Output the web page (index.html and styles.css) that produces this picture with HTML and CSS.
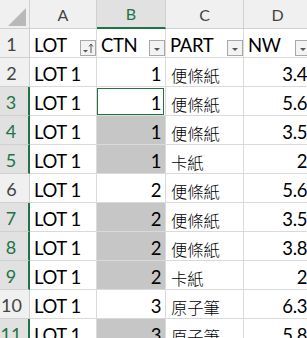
FILE: index.html
```html
<!DOCTYPE html>
<html lang="zh-Hant">
<head>
  <meta charset="UTF-8" />
  <title>Sheet</title>
  <link rel="stylesheet" href="styles.css">
</head>
<body>
  <div class="sheet">
    <div class="head corner">
      <svg width="29" height="28" viewBox="0 0 29 28"><polygon points="8,26 26,26 26,8" fill="#b9b9b9"/></svg>
    </div>
    <div class="head col-head">A</div>
    <div class="head col-head sel">B</div>
    <div class="head col-head">C</div>
    <div class="head col-head">D</div>

    <div class="head row-head">1</div>
    <div class="cell">LOT
      <span class="filter"><svg width="14" height="14" viewBox="0 0 14 14"><polygon points="2,9 7,9 4.5,11.5" fill="#555"/><path d="M10 12V3M8 5.5L10 3L12 5.5" stroke="#555" stroke-width="1" fill="none"/></svg></span>
    </div>
    <div class="cell">CTN
      <span class="filter"><svg width="14" height="14" viewBox="0 0 14 14"><polygon points="4,7 10,7 7,10" fill="#555"/></svg></span>
    </div>
    <div class="cell">PART
      <span class="filter"><svg width="14" height="14" viewBox="0 0 14 14"><polygon points="4,7 10,7 7,10" fill="#555"/></svg></span>
    </div>
    <div class="cell">NW
      <span class="filter"><svg width="14" height="14" viewBox="0 0 14 14"><polygon points="4,7 10,7 7,10" fill="#555"/></svg></span>
    </div>

    <div class="head row-head">2</div>
    <div class="cell">LOT 1</div>
    <div class="cell num">1</div>
    <div class="cell cjk">便條紙</div>
    <div class="cell num">3.4</div>

    <div class="head row-head sel">3</div>
    <div class="cell">LOT 1</div>
    <div class="cell num active">1</div>
    <div class="cell cjk">便條紙</div>
    <div class="cell num">5.6</div>

    <div class="head row-head sel">4</div>
    <div class="cell">LOT 1</div>
    <div class="cell num fill">1</div>
    <div class="cell cjk">便條紙</div>
    <div class="cell num">3.5</div>

    <div class="head row-head sel">5</div>
    <div class="cell">LOT 1</div>
    <div class="cell num fill">1</div>
    <div class="cell cjk">卡紙</div>
    <div class="cell num">2</div>

    <div class="head row-head">6</div>
    <div class="cell">LOT 1</div>
    <div class="cell num">2</div>
    <div class="cell cjk">便條紙</div>
    <div class="cell num">5.6</div>

    <div class="head row-head sel">7</div>
    <div class="cell">LOT 1</div>
    <div class="cell num fill">2</div>
    <div class="cell cjk">便條紙</div>
    <div class="cell num">3.5</div>

    <div class="head row-head sel">8</div>
    <div class="cell">LOT 1</div>
    <div class="cell num fill">2</div>
    <div class="cell cjk">便條紙</div>
    <div class="cell num">3.8</div>

    <div class="head row-head sel">9</div>
    <div class="cell">LOT 1</div>
    <div class="cell num fill">2</div>
    <div class="cell cjk">卡紙</div>
    <div class="cell num">2</div>

    <div class="head row-head">10</div>
    <div class="cell">LOT 1</div>
    <div class="cell num">3</div>
    <div class="cell cjk">原子筆</div>
    <div class="cell num">6.3</div>

    <div class="head row-head sel">11</div>
    <div class="cell">LOT 1</div>
    <div class="cell num fill">3</div>
    <div class="cell cjk">原子筆</div>
    <div class="cell num">5.8</div>
  </div>
</body>
</html>
```

FILE: styles.css
```css
body {
  margin: 0;
  background: #fff;
  overflow: hidden;
  font-family: Lato, "Noto Sans CJK TC", sans-serif;
}

.sheet {
  display: grid;
  grid-template-columns: 30px 67px 69px 78px 68px;
  grid-auto-rows: 29px;
}

.sheet > div {
  box-sizing: border-box;
  position: relative;
  border-right: 1px solid #dadada;
  border-bottom: 1px solid #dadada;
}

.head {
  background: #f0f0f0;
  color: #444;
  border-color: #d0d0d0 !important;
}

.corner svg {
  display: block;
}

.col-head {
  font-size: 16px;
  display: flex;
  align-items: center;
  justify-content: center;
}

.col-head.sel {
  background: #e1e1e1;
  color: #217346;
  border-bottom: 2px solid #217346 !important;
}

.row-head {
  font-size: 18px;
  line-height: 1;
  display: flex;
  align-items: flex-end;
  justify-content: center;
  padding: 0 6px 4px 0;
}

.row-head.sel {
  background: #e1e1e1;
  color: #217346;
  border-right: 2px solid #217346 !important;
}

.cell {
  font-size: 18.5px;
  letter-spacing: -0.4px;
  line-height: 1;
  color: #000;
  display: flex;
  align-items: flex-end;
  padding: 0 4px 3px 4px;
  white-space: nowrap;
}

.num {
  justify-content: flex-end;
}

.cjk {
  font-family: "Noto Sans CJK TC", sans-serif;
  font-size: 16.3px;
  font-weight: 300;
  letter-spacing: 0;
  padding-left: 5px;
  padding-bottom: 3px;
}

.fill {
  background: #c6c6c6;
}

.active::after {
  content: "";
  position: absolute;
  top: 1px;
  left: 0;
  right: 1px;
  bottom: 0;
  border: 1px solid #217346;
}

.filter {
  position: absolute;
  right: 0;
  bottom: 1px;
  width: 16px;
  height: 16px;
  box-sizing: border-box;
  border: 1px solid #a8a8a8;
  background: #f3f3f3;
}

.filter svg {
  display: block;
}
```
